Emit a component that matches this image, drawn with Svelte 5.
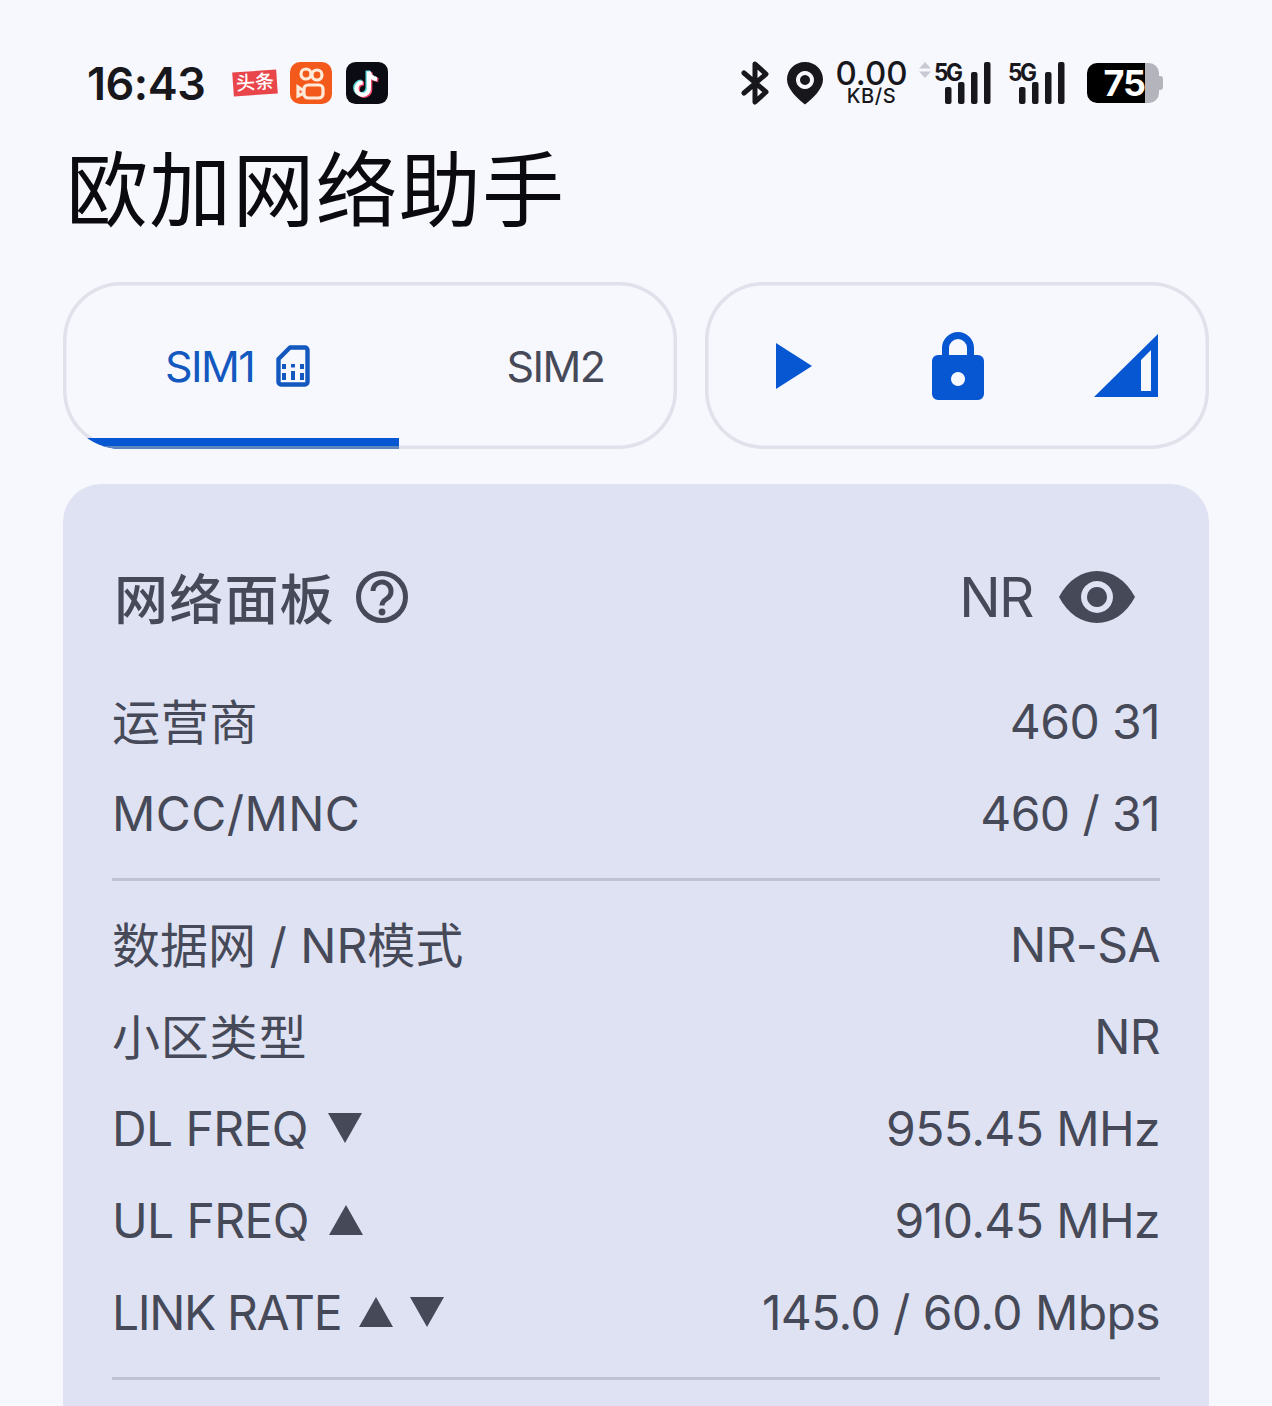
<script>
  const top = [
    { label: '运营商', value: '460 31', kind: 'cjk' },
    { label: 'MCC/MNC', value: '460 / 31', kind: 'wide' }
  ];
  const bottom = [
    { label: '数据网 / NR模式', value: 'NR-SA', kind: 'mixed' },
    { label: '小区类型', value: 'NR', kind: 'cjk' },
    { label: 'DL FREQ', value: '955.45 MHz', arrows: ['down'], kind: 'freq' },
    { label: 'UL FREQ', value: '910.45 MHz', arrows: ['up'], kind: 'freq' },
    { label: 'LINK RATE', value: '145.0 / 60.0 Mbps', arrows: ['up', 'down'], kind: 'tight' }
  ];
</script>

{#snippet signal()}
  <svg class="bars" viewBox="0 0 46 42" width="46" height="42">
    <rect x="0" y="25" width="6.500" height="17" rx="2" />
    <rect x="13" y="20" width="6.500" height="22" rx="2" />
    <rect x="26" y="10" width="6.500" height="32" rx="2" />
    <rect x="39" y="0" width="6.500" height="42" rx="2" />
  </svg>
{/snippet}

{#snippet row(item)}
  <div class="row">
    <div class="label">
      <span class={item.kind}>{item.label}</span>
      {#each item.arrows ?? [] as dir}
        <svg class="arrow" viewBox="0 0 36 34" width="36" height="34">
          {#if dir === 'up'}
            <path d="M18 2 L35 32 H1 Z" />
          {:else}
            <path d="M1 2 H35 L18 32 Z" />
          {/if}
        </svg>
      {/each}
    </div>
    <div class="value">{item.value}</div>
  </div>
{/snippet}

<div class="page">
  <div class="status">
    <div class="left">
      <span class="clock">16:43</span>
      <span class="toutiao">头条</span>
      <svg class="app" viewBox="0 0 42 42" width="42" height="42">
        <rect width="42" height="42" rx="10" fill="#f4591c" />
        <g fill="none" stroke="#ffe9d8" stroke-width="3.200">
          <circle cx="16" cy="12" r="5" />
          <circle cx="27" cy="13" r="5" />
          <rect x="14" y="23" width="19" height="13" rx="4" />
          <path d="M14 29 L8 25 V34 L14 31" />
        </g>
      </svg>
      <svg class="app" viewBox="0 0 44 44" width="42" height="42">
        <rect width="44" height="44" rx="10" fill="#0b0b14" />
        <path d="M24 10 V28 a6.500 6.500 0 1 1 -6.500 -6.500 M24 10 c0.500 4.500 3.500 7.500 8.500 8" fill="none" stroke="#59d7dc" stroke-width="4.400" transform="translate(-1.400 -1)" />
        <path d="M24 10 V28 a6.500 6.500 0 1 1 -6.500 -6.500 M24 10 c0.500 4.500 3.500 7.500 8.500 8" fill="none" stroke="#f0466a" stroke-width="4.400" transform="translate(1.400 1)" />
        <path d="M24 10 V28 a6.500 6.500 0 1 1 -6.500 -6.500 M24 10 c0.500 4.500 3.500 7.500 8.500 8" fill="none" stroke="#fff" stroke-width="4.400" />
      </svg>
    </div>
    <div class="right">
      <svg class="bt" viewBox="0 0 28 44" width="28" height="44">
        <path d="M3 12 L25 31 L14 41 V3 L25 13 L3 32" fill="none" stroke="#17171c" stroke-width="5" stroke-linejoin="round" stroke-linecap="round" />
      </svg>
      <svg class="pin" viewBox="0 0 38 44" width="38" height="44">
        <path fill-rule="evenodd" fill="#17171c" d="M19 1 C8.500 1 1 9 1 18.500 C1 28 11 37 19 43.500 C27 37 37 28 37 18.500 C37 9 29.500 1 19 1 Z M19 10 a9 9 0 1 1 -0.010 0 Z M19 14 a5 5 0 1 0 0.010 0 Z" />
      </svg>
      <div class="speed">
        <span class="num">0.00</span>
        <span class="unit">KB/S</span>
      </div>
      <div class="sim-signal first">
        <svg class="updown" viewBox="0 0 12 16" width="12" height="16">
          <path d="M6 0 L12 6.500 H0 Z M0 9.500 H12 L6 16 Z" />
        </svg>
        <span class="five">5G</span>
        {@render signal()}
      </div>
      <div class="sim-signal">
        <span class="five">5G</span>
        {@render signal()}
      </div>
      <div class="battery">
        <div class="fill">75</div>
        <div class="rest"></div>
        <div class="nub"></div>
      </div>
    </div>
  </div>

  <h1>欧加网络助手</h1>

  <div class="controls">
    <div class="box tabs">
      <div class="tab active">
        <span>SIM1</span>
        <svg viewBox="0 0 34 42" width="34" height="42">
          <path d="M14 2.500 H29 a2.500 2.500 0 0 1 2.500 2.500 V37 a2.500 2.500 0 0 1 -2.500 2.500 H5 a2.500 2.500 0 0 1 -2.500 -2.500 V14 Z" fill="none" stroke="#1258bf" stroke-width="4.400" stroke-linejoin="round" />
          <g fill="#1258bf">
            <rect x="6" y="19" width="4" height="5" /><rect x="15" y="19" width="4" height="3.500" /><rect x="24" y="19" width="4" height="5" />
            <rect x="15" y="26" width="4" height="9" /><rect x="6" y="28" width="4" height="7" /><rect x="24" y="28" width="4" height="7" />
          </g>
        </svg>
      </div>
      <div class="tab">SIM2</div>
    </div>
    <div class="box actions">
      <svg viewBox="0 0 36 46" width="36" height="46">
        <path d="M0 0 L36 23 L0 46 Z" fill="#0756d2" />
      </svg>
      <svg class="lock" viewBox="0 0 52 68" width="52" height="68">
        <path fill-rule="evenodd" fill="#0756d2" d="M10 23 V16 a16 16 0 0 1 32 0 V23 H46 a6 6 0 0 1 6 6 V62 a6 6 0 0 1 -6 6 H6 a6 6 0 0 1 -6 -6 V29 a6 6 0 0 1 6 -6 Z M17 23 H35 V16 a9 9 0 0 0 -18 0 Z M26 40 a7 7 0 1 0 0.010 0 Z" />
      </svg>
      <svg viewBox="0 0 64 64" width="64" height="64">
        <path fill-rule="evenodd" fill="#0756d2" d="M64 0 V63 H0 Z M57 16 L47 26 V57 H57 Z" />
      </svg>
    </div>
  </div>

  <section class="card">
    <div class="head">
      <div class="title">
        <span>网络面板</span>
        <svg viewBox="0 0 52 52" width="52" height="52">
          <circle cx="26" cy="26" r="23.500" fill="none" stroke="#464958" stroke-width="5" />
          <path d="M17 20 a9 9 0 1 1 14 7.500 c-3 2 -5 3.500 -5 7" fill="none" stroke="#464958" stroke-width="5" />
          <circle cx="26" cy="41" r="3.400" fill="#464958" />
        </svg>
      </div>
      <div class="mode">
        <span>NR</span>
        <svg viewBox="0 0 76 52" width="76" height="52">
          <path fill-rule="evenodd" fill="#464958" d="M0 26 C9 9 23 0 38 0 C53 0 67 9 76 26 C67 43 53 52 38 52 C23 52 9 43 0 26 Z M38 10 a16 16 0 1 0 0.010 0 Z M38 16 a10 10 0 1 1 -0.010 0 Z" />
        </svg>
      </div>
    </div>

    <div class="group">
      {#each top as item}
        {@render row(item)}
      {/each}
    </div>
    <div class="group">
      {#each bottom as item}
        {@render row(item)}
      {/each}
    </div>
  </section>
</div>

<style>
  :global(body) {
    margin: 0;
    background: #f7f7fe;
  }

  .page {
    height: 1406px;
    overflow: hidden;
    box-sizing: border-box;
    padding: 58px 63px 0;
    font-family: Inter, "Noto Sans CJK SC", sans-serif;
    color: #464958;
  }

  .status {
    display: flex;
    justify-content: space-between;
    align-items: center;
    height: 50px;
    padding: 0 46px 0 24px;
    color: #17171c;
  }

  .left,
  .right {
    display: flex;
    align-items: center;
  }

  .clock {
    font-size: 45px;
    font-weight: 600;
    letter-spacing: -0.5px;
    width: 146px;
  }

  .toutiao {
    width: 44px;
    height: 24px;
    margin-right: 13px;
    background: #e8464b;
    color: #fff;
    font-size: 19px;
    line-height: 24px;
    text-align: center;
    font-weight: 500;
    transform: rotate(-4deg);
  }

  .left .app + .app {
    margin-left: 14px;
  }

  .bt {
    margin-right: 17px;
  }

  .pin {
    margin-right: 13px;
  }

  .speed {
    display: flex;
    flex-direction: column;
    align-items: center;
    width: 69px;
    line-height: 1;
    margin-right: 28px;
    padding-top: 5px;
  }

  .num {
    font-size: 33px;
    font-weight: 500;
    height: 26px;
    line-height: 26px;
    margin-top: -6px;
  }

  .unit {
    font-size: 20px;
    line-height: 20px;
    font-weight: 500;
    letter-spacing: 0.6px;
  }

  .sim-signal {
    position: relative;
    width: 57px;
    height: 42px;
    margin-right: 17px;
  }

  .updown {
    position: absolute;
    left: -15px;
    top: 0;
    fill: #c8c9d2;
  }

  .five {
    position: absolute;
    left: 0;
    top: -4px;
    font-size: 24px;
    font-weight: 700;
    letter-spacing: -2.5px;
    transform: scaleX(0.94);
    transform-origin: left;
  }

  .bars {
    position: absolute;
    right: 0;
    bottom: 0;
    fill: #17171c;
  }

  .battery {
    display: flex;
    align-items: center;
    height: 40px;
    margin-left: 5px;
  }

  .fill {
    width: 58px;
    height: 40px;
    background: #000;
    color: #fff;
    font-size: 36px;
    font-weight: 700;
    line-height: 40px;
    text-align: right;
    border-radius: 10px 0 0 10px;
    letter-spacing: -1px;
  }

  .rest {
    width: 14px;
    height: 40px;
    background: #b4b4bc;
    border-radius: 0 10px 10px 0;
  }

  .nub {
    width: 4px;
    height: 14px;
    background: #b4b4bc;
    border-radius: 0 3px 3px 0;
  }

  h1 {
    margin: 0;
    padding: 30px 0 0 3px;
    height: 156px;
    box-sizing: border-box;
    font-size: 82px;
    line-height: 106px;
    font-weight: 400;
    letter-spacing: 1.2px;
    color: #0a0a0f;
  }

  .controls {
    display: flex;
    gap: 28px;
    margin: 18px 0 0 0;
  }

  .box {
    box-sizing: border-box;
    height: 167px;
    box-shadow: inset 0 0 0 3.5px #e0e1ea;
    border-radius: 58px;
    display: flex;
    overflow: hidden;
  }

  .tabs {
    width: 614px;
  }

  .tab {
    display: flex;
    align-items: center;
    justify-content: center;
    gap: 22px;
    font-size: 43px;
    letter-spacing: -1.6px;
    width: 276px;
    padding-left: 37px;
    box-sizing: border-box;
  }

  .tab.active {
    width: 336px;
    padding-left: 13px;
    color: #1258bf;
    box-shadow: inset 0 -3px 0 #5f86bd, inset 0 -11px 0 #0756d2;
  }

  .actions {
    flex: 1;
    align-items: center;
    justify-content: space-between;
    padding: 0 51px 0 71px;
  }

  .lock {
    margin-left: 9px;
  }

  .card {
    margin-top: 35px;
    background: #dfe2f2;
    border-radius: 38px 38px 0 0;
    padding: 0 49px;
    height: 1000px;
  }

  .head {
    display: flex;
    justify-content: space-between;
    align-items: center;
    padding: 34px 25px 0 2px;
    box-sizing: border-box;
    height: 191px;
  }

  .title,
  .mode {
    display: flex;
    align-items: center;
  }

  .title {
    gap: 21px;
    font-size: 54px;
    font-weight: 500;
    letter-spacing: 1.2px;
  }

  .mode {
    gap: 26px;
    font-size: 55px;
    letter-spacing: -1.5px;
  }

  .group {
    padding: 0 0 19px;
    border-bottom: 3.5px solid #bec2d3;
    margin-bottom: 17px;
  }

  .row {
    display: flex;
    justify-content: space-between;
    align-items: center;
    height: 92px;
    font-size: 48px;
  }

  .value {
    letter-spacing: -0.6px;
  }

  .label {
    display: flex;
    align-items: center;
    gap: 19px;
  }

  .cjk {
    padding-bottom: 4px;
    letter-spacing: 0.8px;
  }

  .mixed {
    padding-bottom: 4px;
  }

  .wide {
    letter-spacing: 0.4px;
  }

  .freq {
    letter-spacing: -0.6px;
  }

  .tight {
    letter-spacing: -1.4px;
    margin-right: -2px;
  }

  .arrow {
    fill: #464958;
  }

  .arrow + .arrow {
    margin-left: -4px;
  }
</style>
